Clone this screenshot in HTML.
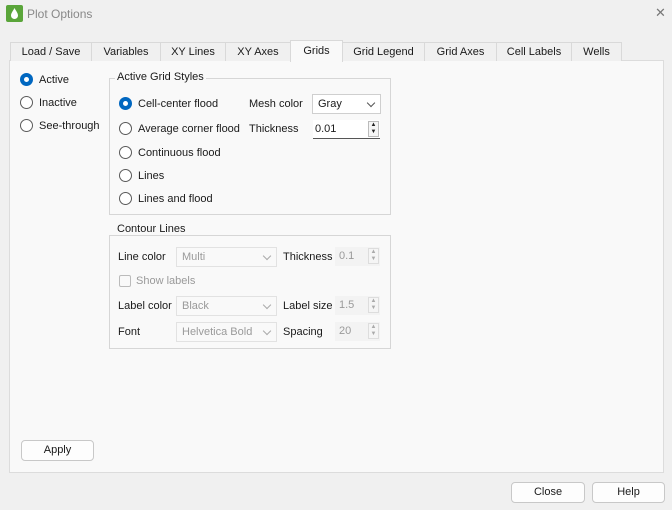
<!DOCTYPE html>
<html><head><meta charset="utf-8"><style>
*{box-sizing:border-box;margin:0;padding:0}
body{width:672px;height:510px;background:#f0f0f0;font-family:"Liberation Sans",sans-serif;font-size:11px;color:#1a1a1a;position:relative;overflow:hidden}
.a{position:absolute;white-space:nowrap}
.tab{position:absolute;top:42px;height:19px;border:1px solid #d9d9d9;border-bottom:none;background:#f0f0f0;text-align:center;line-height:18px}
.panel{position:absolute;left:9px;top:60px;width:655px;height:413px;background:#f9f9f9;border:1px solid #dcdcdc}
.grp{position:absolute;border:1px solid #d6d6d6}
.leg{position:absolute;background:#f9f9f9;padding:0 2px}
.rad{position:absolute;width:13px;height:13px;border:1px solid #5a5a5a;border-radius:50%;background:#fff}
.rad.on{background:#0067c0;border-color:#0067c0}
.rad.on::after{content:"";position:absolute;left:3px;top:3px;width:5px;height:5px;border-radius:50%;background:#fff}
.combo{position:absolute;height:20px;border:1px solid #cfcfcf;background:#fff;padding-left:5px;line-height:18px}
.combo.dis{color:#9a9a9a;background:#f9f9f9;border-color:#e2e2e2}
.chev{position:absolute;right:6px;top:5px;width:6px;height:6px;border-right:1px solid #555;border-bottom:1px solid #555;transform:rotate(45deg)}
.dis .chev{border-color:#aaa}
.spin{position:absolute;height:19px;background:#fff;border-bottom:1px solid #555;padding-left:2px;line-height:18px}
.spin.dis{background:#f3f3f3;color:#9a9a9a;border:none;padding-left:4px}
.sb{position:absolute;right:1px;top:1px;width:11px;height:16px;border:1px solid #bbb;background:#f5f5f5;font-size:6px;line-height:7px;text-align:center;color:#222}
.dis .sb{color:#aaa;border-color:#ddd}
.btn{position:absolute;height:21px;border:1px solid #c8c8c8;border-radius:4px;background:#fdfdfd;text-align:center;line-height:19px}
</style></head><body>
<div class="a" style="left:6px;top:5px;width:17px;height:17px;background:#5aa53a;border-radius:2px"></div>
<svg class="a" style="left:8px;top:7px" width="13" height="13" viewBox="0 0 13 13"><path d="M6.5 1 C8 4 10 6 10 8.5 A3.5 3.5 0 0 1 3 8.5 C3 6 5 4 6.5 1Z" fill="#fff"/></svg>
<div class="a" style="left:27px;top:7px;font-size:12px;color:#888">Plot Options</div>
<div class="a" style="left:655px;top:5px;font-size:13px;color:#777">✕</div>
<div class="panel"></div>
<div class="tab" style="left:10px;width:82px">Load / Save</div>
<div class="tab" style="left:91px;width:70px">Variables</div>
<div class="tab" style="left:160px;width:66px">XY Lines</div>
<div class="tab" style="left:225px;width:66px">XY Axes</div>
<div class="tab" style="left:342px;width:83px">Grid Legend</div>
<div class="tab" style="left:424px;width:73px">Grid Axes</div>
<div class="tab" style="left:496px;width:76px">Cell Labels</div>
<div class="tab" style="left:571px;width:51px">Wells</div>
<div class="tab" style="left:290px;top:40px;height:22px;width:53px;background:#f9f9f9;line-height:21px">Grids</div>
<div class="rad on" style="left:20px;top:73px"></div><div class="a" style="left:39px;top:74px">Active</div>
<div class="rad" style="left:20px;top:96px"></div><div class="a" style="left:39px;top:97px">Inactive</div>
<div class="rad" style="left:20px;top:119px"></div><div class="a" style="left:39px;top:120px">See-through</div>
<div class="grp" style="left:109px;top:78px;width:282px;height:137px"></div>
<div class="leg" style="left:115px;top:71px">Active Grid Styles</div>
<div class="rad on" style="left:119px;top:97px"></div><div class="a" style="left:138px;top:98px">Cell-center flood</div>
<div class="rad" style="left:119px;top:122px"></div><div class="a" style="left:138px;top:123px">Average corner flood</div>
<div class="rad" style="left:119px;top:146px"></div><div class="a" style="left:138px;top:147px">Continuous flood</div>
<div class="rad" style="left:119px;top:169px"></div><div class="a" style="left:138px;top:170px">Lines</div>
<div class="rad" style="left:119px;top:192px"></div><div class="a" style="left:138px;top:193px">Lines and flood</div>
<div class="a" style="left:249px;top:98px">Mesh color</div>
<div class="combo" style="left:312px;top:94px;width:69px">Gray<span class="chev"></span></div>
<div class="a" style="left:249px;top:123px">Thickness</div>
<div class="spin" style="left:313px;top:120px;width:67px">0.01<div class="sb">▲<br>▼</div></div>
<div class="grp" style="left:109px;top:235px;width:282px;height:114px"></div>
<div class="leg" style="left:115px;top:223px">Contour Lines</div>
<div class="a" style="left:118px;top:251px">Line color</div>
<div class="combo dis" style="left:176px;top:247px;width:101px">Multi<span class="chev"></span></div>
<div class="a" style="left:283px;top:251px">Thickness</div>
<div class="spin dis" style="left:335px;top:247px;width:45px;height:19px">0.1<div class="sb">▲<br>▼</div></div>
<div class="a" style="left:119px;top:275px;width:12px;height:12px;border:1px solid #bbb;border-radius:2px;background:#f9f9f9"></div>
<div class="a" style="left:136px;top:275px;color:#9a9a9a">Show labels</div>
<div class="a" style="left:118px;top:300px">Label color</div>
<div class="combo dis" style="left:176px;top:296px;width:101px">Black<span class="chev"></span></div>
<div class="a" style="left:283px;top:300px">Label size</div>
<div class="spin dis" style="left:335px;top:296px;width:45px;height:19px">1.5<div class="sb">▲<br>▼</div></div>
<div class="a" style="left:118px;top:326px">Font</div>
<div class="combo dis" style="left:176px;top:322px;width:101px">Helvetica Bold<span class="chev"></span></div>
<div class="a" style="left:283px;top:326px">Spacing</div>
<div class="spin dis" style="left:335px;top:322px;width:45px;height:19px">20<div class="sb">▲<br>▼</div></div>
<div class="btn" style="left:21px;top:440px;width:73px">Apply</div>
<div class="btn" style="left:511px;top:482px;width:74px">Close</div>
<div class="btn" style="left:592px;top:482px;width:73px">Help</div>
</body></html>
